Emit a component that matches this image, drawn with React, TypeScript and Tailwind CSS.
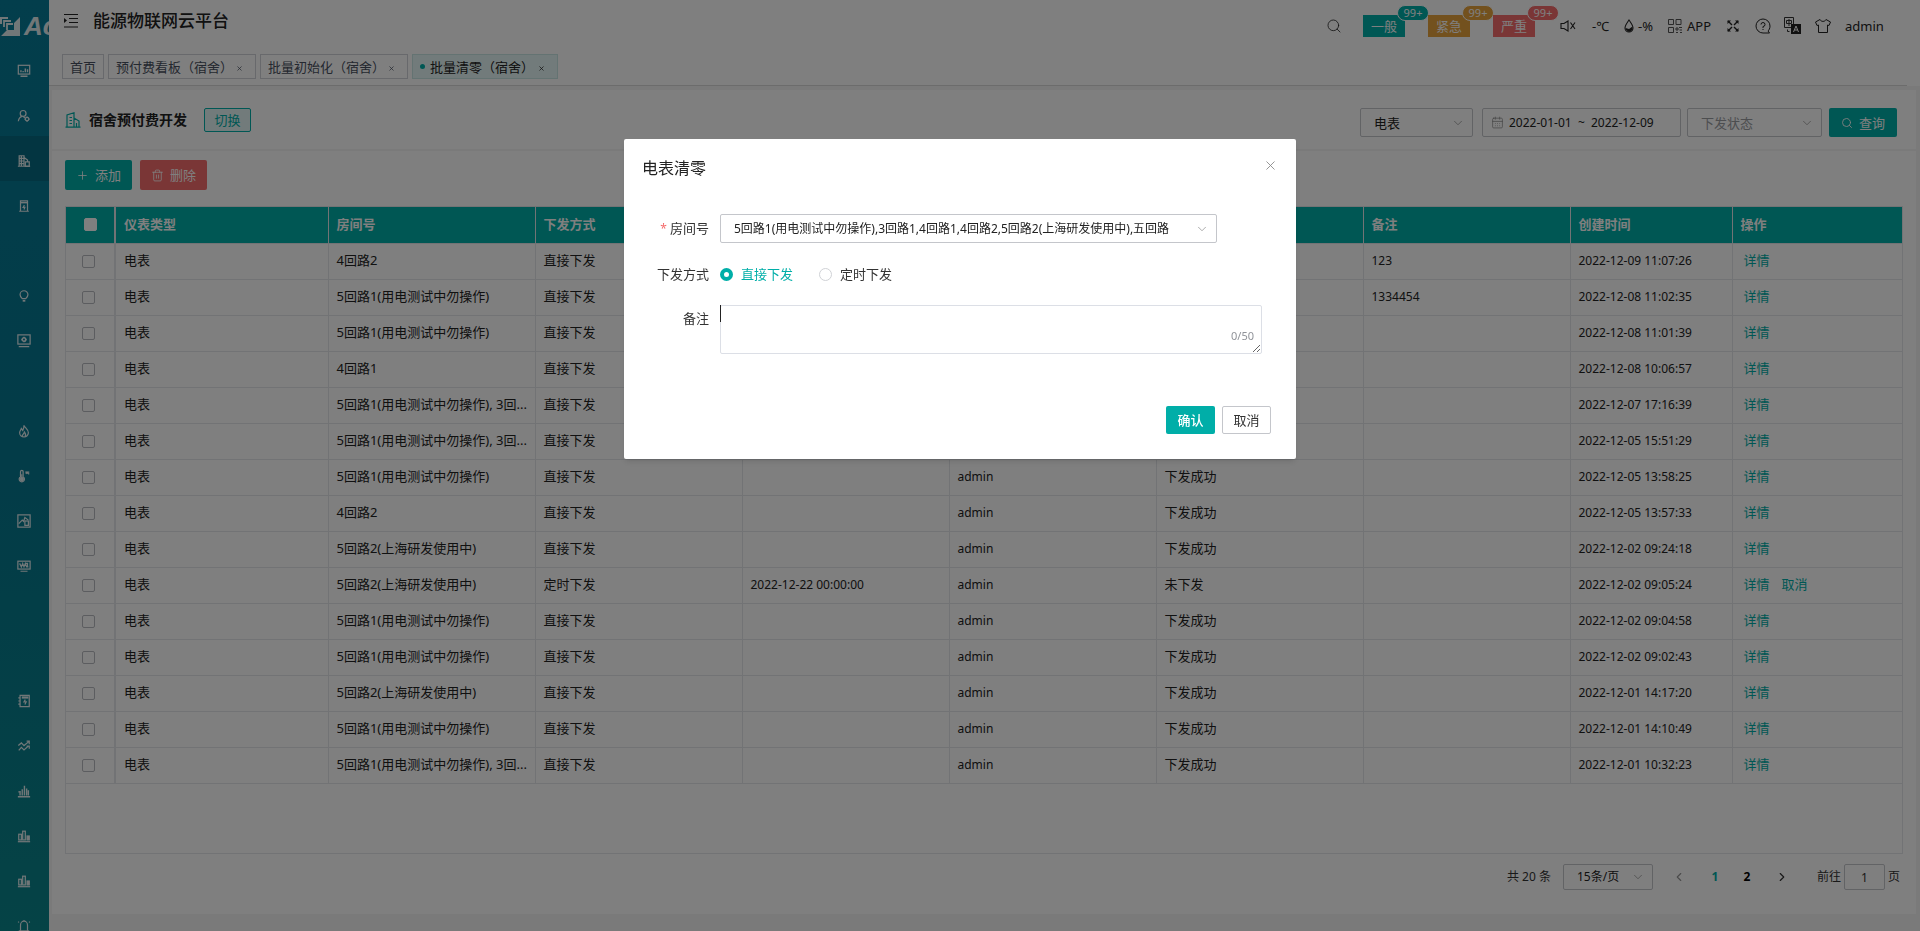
import React, { useState } from 'react';
import {
    CalendarDays, ChevronDown, ChevronLeft, ChevronRight, Plus, Search, Trash2, X,
} from 'lucide-react';

interface Row {
    room: string;
    mode: string;
    timing?: string;
    status: string;
    remark?: string;
    created: string;
    cancelable?: boolean;
}

const ROOM_A = '5回路1(用电测试中勿操作)';
const ROOM_B = '5回路2(上海研发使用中)';
const ROOM_LONG = '5回路1(用电测试中勿操作), 3回...';
const ROOM_ALL = '5回路1(用电测试中勿操作),3回路1,4回路1,4回路2,5回路2(上海研发使用中),五回路';

const rows: Row[] = [
    { room: '4回路2', mode: '直接下发', status: '下发成功', remark: '123', created: '2022-12-09 11:07:26' },
    { room: ROOM_A, mode: '直接下发', status: '下发成功', remark: '1334454', created: '2022-12-08 11:02:35' },
    { room: ROOM_A, mode: '直接下发', status: '下发成功', created: '2022-12-08 11:01:39' },
    { room: '4回路1', mode: '直接下发', status: '下发成功', created: '2022-12-08 10:06:57' },
    { room: ROOM_LONG, mode: '直接下发', status: '下发成功', created: '2022-12-07 17:16:39' },
    { room: ROOM_LONG, mode: '直接下发', status: '下发成功', created: '2022-12-05 15:51:29' },
    { room: ROOM_A, mode: '直接下发', status: '下发成功', created: '2022-12-05 13:58:25' },
    { room: '4回路2', mode: '直接下发', status: '下发成功', created: '2022-12-05 13:57:33' },
    { room: ROOM_B, mode: '直接下发', status: '下发成功', created: '2022-12-02 09:24:18' },
    { room: ROOM_B, mode: '定时下发', timing: '2022-12-22 00:00:00', status: '未下发', created: '2022-12-02 09:05:24', cancelable: true },
    { room: ROOM_A, mode: '直接下发', status: '下发成功', created: '2022-12-02 09:04:58' },
    { room: ROOM_A, mode: '直接下发', status: '下发成功', created: '2022-12-02 09:02:43' },
    { room: ROOM_B, mode: '直接下发', status: '下发成功', created: '2022-12-01 14:17:20' },
    { room: ROOM_A, mode: '直接下发', status: '下发成功', created: '2022-12-01 14:10:49' },
    { room: ROOM_LONG, mode: '直接下发', status: '下发成功', created: '2022-12-01 10:32:23' },
];

const icons: Record<string, React.ReactNode> = {
    monitor: <><rect x="1.5" y="1.5" width="13" height="10" /><path d="M4.500 9.500V7M7 9.500V8M9.500 9.500V5M12 9.500V6M4 14H12" strokeWidth="1.6" /></>,
    user: <><circle cx="7" cy="5" r="3.300" /><path d="M1.500 14C2 11 3.500 9 6 8.500M7 8.500L9 10" /><circle cx="11.500" cy="11.500" r="2" /><path d="M11.500 8.500V9.500M11.500 13.500V14.500M8.500 11.500H9.500M13.500 11.500H14.500" /></>,
    building: <><path d="M2.500 14V2H8V14M1 14H15M5 2V14M2.500 5H8M2.500 8H8M2.500 11H8M8 4L12 7V9" /><rect x="9.500" y="9" width="4.500" height="5" /></>,
    charger: <><path d="M4 14V2H12V14M2.500 14H13.500" /><path d="M4 4H12" strokeWidth="2" /><path d="M8.500 7L7 9.500H9L8 12" /></>,
    bulb: <><path d="M6 11C4.500 9.500 3.500 8.500 3.500 6.500A4.500 4.500 0 0 1 12.500 6.500C12.500 8.500 11.500 9.500 10 11Z" /><path d="M6.500 13.500H9.500" strokeWidth="2" /></>,
    screen: <><rect x="1" y="1" width="14" height="10.500" /><circle cx="8" cy="6.300" r="2" strokeWidth="1.8" /><path d="M8 3V4.500M8 8V9.500M5 6.300H6M10 6.300H11M2 14.500H14" /></>,
    fire: <path d="M8 1.500C8.500 4 13 6 13 10A5 4.800 0 0 1 3 10C3 8 4.500 7 5 5C6 6 6 7 6.500 7.500C7.500 6 8 4 8 1.500ZM6 14C6 12 8 11.500 8.500 9C10 10.500 10 12 9.500 14" />,
    thermo: <><path d="M4 9V3A1.500 1.500 0 0 1 7 3V9A3 3 0 1 1 4 9Z" /><circle cx="5.500" cy="11.500" r="1.800" fill="currentColor" /><path d="M5.500 6V11M10 3L14 6M10 5.500L13 3M9.500 3.500H14" /></>,
    image: <><rect x="1" y="1" width="14" height="14" /><path d="M2 11L6 7L7.500 8.500L9 4L13 7" /><rect x="9" y="8" width="4" height="5" /></>,
    wave: <><rect x="1" y="2.500" width="14" height="9" /><path d="M3 5L5 9L6.500 5L8 9L9.500 5L11 9L13 9M9 5H12V9M4 14H12" /></>,
    book: <><path d="M3.500 1.500H14V14.500H3.500ZM1.500 4.500H4M1.500 8H4M1.500 11.500H4" /><path d="M5.500 4H13" strokeWidth="2.5" /><path d="M9.500 6.500L8 9H10.500L9 12" /></>,
    trend: <path d="M1.500 7.500L5 4.500L8 7.500L13.500 3M11 2.500H14V6M2 13L5 9.500L8 12.500L13 8M11 8H14V11" />,
    bars: <path d="M1 14.500H15M3.500 13V8M6 13V6M8.500 13V2M11 13V5M13 13V7M1.500 9H3.500" strokeWidth="1.6" />,
    columns: <><path d="M1 14.500H15" /><rect x="2" y="6" width="3" height="6.500" /><rect x="6.500" y="2.500" width="3" height="10" /><rect x="11.500" y="8" width="2.500" height="4.500" fill="currentColor" /></>,
    bell: <path d="M2 13.500H14M4 13V7A4 4.500 0 0 1 12 7V13M8 2V1M2 4L1.500 3M14 4L14.500 3M7 15H9" />,
};

const menu = [
    'monitor', 'user', 'building', 'charger', '', 'bulb', 'screen', '', 'fire', 'thermo', 'image', 'wave',
    '', '', 'book', 'trend', 'bars', 'columns', 'columns', 'bell',
];

const Sidebar = () => (
    <aside className="w-[49px] shrink-0 overflow-hidden bg-gradient-to-b from-[#067c98] via-[#067890] to-[#0b868c] text-[#e3eef0]">
        <div className="flex h-[46px] w-24 items-end pb-2.5">
            <svg viewBox="0 0 20 20" className="h-5 w-5 shrink-0">
                <path d="M0 1H8V3H2V8H0ZM20 1V20H1L7 14H14V7Z" fill="currentColor" />
                <path d="M4 11V5H11M7 14V8H13" fill="none" stroke="currentColor" strokeWidth="1.8" />
            </svg>
            <span className="ml-1 font-['Liberation_Sans',sans-serif] text-[26px] leading-5 font-bold italic">Ac</span>
        </div>
        <nav>
            {menu.map((name, i) => (
                <a
                    key={i}
                    href="#"
                    aria-label={name || 'menu'}
                    className={`flex h-[45px] items-center justify-center pt-1 pr-0.5 ${i === 2 ? 'bg-[#066a82]' : ''}`}
                >
                    {name && (
                        <svg viewBox="0 0 16 16" className="h-3.5 w-3.5" fill="none" stroke="currentColor" strokeWidth="1.4">
                            {icons[name]}
                        </svg>
                    )}
                </a>
            ))}
        </nav>
    </aside>
);

const Alarm = ({ label, className }: { label: string; className: string }) => (
    <button className={`relative mr-[23px] h-[22px] w-[42px] text-white ${className}`}>
        {label}
        <span className={`absolute -top-2.5 left-[34px] flex h-4 w-8 items-center justify-center rounded-full border border-white text-[11px] ${className}`}>99+</span>
    </button>
);

const Header = () => (
    <header className="bg-white">
        <div className="flex h-[43px] items-center pr-10 pl-3.5">
            <button aria-label="收起菜单" className="mr-3.5 mb-0.5">
                <svg viewBox="0 0 16 16" className="h-4 w-4" fill="none" stroke="#222" strokeWidth="1.1">
                    <path d="M1 1.500H15M6 5.500H15M6 9.500H15M1 14H15" />
                    <path d="M1 5L4 7.500L1 10Z" fill="#222" stroke="none" />
                </svg>
            </button>
            <h1 className="flex-1 pb-0.5 text-[17px] font-medium text-[#222]">能源物联网云平台</h1>
            <div className="flex items-center pt-2">
                <button aria-label="搜索" className="mr-[21px]"><Search size={16} strokeWidth={1.2} /></button>
                <Alarm label="一般" className="bg-[#00aea8]" />
                <Alarm label="紧急" className="bg-[#e6a23c]" />
                <Alarm label="严重" className="bg-[#f56c6c]" />
                <svg viewBox="0 0 16 16" className="ml-0.5 h-4 w-4" fill="none" stroke="#222" strokeWidth="1.1">
                    <path d="M1 5.500H4L8 3V13L4 10.500H1ZM10.500 4.500L15 11M15 4.500L10.500 11" />
                </svg>
                <span className="ml-4 w-8">-℃</span>
                <svg viewBox="0 0 10 14" className="h-3.5 w-2.5" fill="none" stroke="#222" strokeWidth="1.1">
                    <path d="M5 1C7 4 9 6.500 9 9A4 4 0 0 1 1 9C1 6.500 3 4 5 1Z" />
                    <path d="M1.500 9L5 10L8.500 7.500V11L5 13L2 11Z" fill="#222" stroke="none" />
                </svg>
                <span className="ml-1 w-[30px]">-%</span>
                <svg viewBox="0 0 14 14" className="h-3.5 w-3.5" fill="none" stroke="#555" strokeWidth="1">
                    <path d="M.5.500H5.500V5.500H.5ZM8 .5H13V5.500H8ZM.5 8.500H5.500V13.500H.5Z" />
                    <path d="M8 9H10V11H8ZM11 8.500H14M11.500 11H14M8 13.500H10M12 13.500H14" />
                </svg>
                <span className="ml-[5px] w-10">APP</span>
                <button aria-label="全屏">
                    <svg viewBox="0 0 12 12" className="h-3 w-3" fill="#222" stroke="#222" strokeWidth="1.4">
                        <path d="M1 1L5 5M11 1L7 5M1 11L5 7M11 11L7 7" />
                        <path d="M.5.500H4L.5 4ZM11.500.500H8L11.500 4ZM.5 11.500H4L.5 8ZM11.500 11.500H8L11.500 8Z" stroke="none" />
                    </svg>
                </button>
                <button aria-label="帮助" className="ml-4">
                    <svg viewBox="0 0 16 16" className="h-4 w-4" fill="none" stroke="#222" strokeWidth="1">
                        <path d="M14.500 15H8A7 7 0 1 1 15 8C15 10.500 14 12 13 13ZM6 6.500A2 2 0 1 1 8 8.500V10M8 11V12" />
                    </svg>
                </button>
                <button aria-label="语言" className="ml-[13px]">
                    <svg viewBox="0 0 17 17" className="h-[17px] w-[17px]" fill="none" stroke="#333" strokeWidth="1">
                        <path d="M.5.500H9.500V10.500H.5ZM2.500 3.500H7.500V6.500H2.500ZM5 2V9M3.500 12.500V14.500H5.500" />
                        <rect x="7" y="7" width="10" height="10" fill="#222" stroke="none" />
                        <path d="M9.500 15L12 9L14.500 15M10.500 13H13.500" stroke="#fff" />
                    </svg>
                </button>
                <button aria-label="主题" className="ml-3.5">
                    <svg viewBox="0 0 16 16" className="h-4 w-4" fill="none" stroke="#222" strokeWidth="1">
                        <path d="M5 1.500C6 4 10 4 11 1.500L15.500 4L14 7.500L12.500 7V14.500H3.500V7L2 7.500L.5 4Z" />
                    </svg>
                </button>
                <span className="ml-3.5 w-[35px]">admin</span>
            </div>
        </div>
        <nav className="mr-[13px] flex h-[43px] items-start gap-1 border-b border-[#d8d8d8] pt-[11px] pl-[13px] text-[#495060]">
            <a href="#" className="flex h-[25px] w-[42px] items-center justify-center border border-[#d0d3d8]">首页</a>
            {['预付费看板（宿舍）', '批量初始化（宿舍）'].map((t) => (
                <a key={t} href="#" className="flex h-[25px] w-[148px] items-center justify-between border border-[#d0d3d8] pr-3 pl-[7px]">
                    {t}<X size={7} strokeWidth={2.5} className="mt-1 shrink-0" />
                </a>
            ))}
            <a href="#" className="flex h-[25px] w-[146px] items-center border border-[#c8e6e4] bg-[#e5f7f6] pr-3 pl-[7px] text-[#222]">
                <span className="mr-[5px] h-[5px] w-[5px] shrink-0 rounded-full bg-[#00aea8]" />
                <span className="flex-1 whitespace-nowrap">批量清零（宿舍）</span>
                <X size={7} strokeWidth={2.5} className="mt-1 shrink-0" />
            </a>
        </nav>
    </header>
);

interface SelectProps {
    label: string;
    options: string[];
    className: string;
    muted?: boolean;
}

const Select = ({ label, options, className, muted }: SelectProps) => (
    <div className={`relative ${className}`}>
        <select
            aria-label={label}
            className={`h-full w-full appearance-none rounded-xs border border-[#c4c6cb] bg-white pr-6 pl-[13px] ${muted ? 'text-[#9a9ca1]' : 'text-[#222]'}`}
        >
            {options.map((o) => <option key={o}>{o}</option>)}
        </select>
        <ChevronDown size={14} strokeWidth={1.2} className="pointer-events-none absolute top-1/2 right-2 -translate-y-1/2 text-[#888]" />
    </div>
);

const Toolbar = () => (
    <section className="flex h-[59px] items-center bg-white pr-[19px] pl-[13px]">
        <svg viewBox="0 0 16 16" className="h-4 w-4" fill="none" stroke="#00aea8" strokeWidth="1.2">
            <path d="M.5 15.200H15.500M2 15V3L9 .800V15M9 6L14 9V15M4.500 5.500H7M4.500 8.500H7M4.500 11.500H7M11.500 11V15" />
        </svg>
        <h2 className="ml-2 text-[14px] font-bold text-[#222]">宿舍预付费开发</h2>
        <button className="ml-[17px] h-6 w-[47px] rounded-xs border border-[#00aea8] bg-[#e5f7f6] text-[#00aea8]">切换</button>
        <div className="ml-auto flex items-center pt-1.5">
            <Select label="仪表类型" options={['电表', '水表']} className="h-[29px] w-[113px]" />
            <label className="ml-[9px] flex h-[29px] w-[199px] items-center rounded-xs border border-[#c4c6cb] px-2 text-[12px]">
                <CalendarDays size={13} strokeWidth={1.3} className="shrink-0 text-[#888]" />
                <input aria-label="日期范围" defaultValue="2022-01-01  ~  2022-12-09" className="ml-[5px] w-full whitespace-pre outline-none" />
            </label>
            <Select label="下发状态" options={['下发状态', '下发成功', '未下发']} className="ml-1.5 h-[29px] w-[135px]" muted />
            <button className="ml-[7px] flex h-[29px] w-[68px] items-center justify-center gap-1.5 rounded-xs bg-[#00aea8] text-white">
                <Search size={12} strokeWidth={1.8} />查询
            </button>
        </div>
    </section>
);

const Checkbox = ({ label, className = 'border-[#b9bbc0]' }: { label: string; className?: string }) => (
    <input type="checkbox" aria-label={label} className={`block h-[13px] w-[13px] appearance-none rounded-xs border bg-white ${className}`} />
);

const headings = ['仪表类型', '房间号', '下发方式', '定时时间', '操作人', '下发状态', '备注', '创建时间', '操作'];

const RecordTable = () => (
    <div className="h-[648px] border border-[#e4e6ea]">
        <table className="w-full table-fixed border-collapse text-left text-[#222]">
            <colgroup>
                <col className="w-[49px]" />
                <col className="w-[213px]" />
                <col className="w-[207px]" />
                <col className="w-[207px]" />
                <col className="w-[207px]" />
                <col className="w-[207px]" />
                <col className="w-[207px]" />
                <col className="w-[207px]" />
                <col className="w-[162px]" />
                <col />
            </colgroup>
            <thead>
                <tr className="h-9 bg-[#00aea8] text-white">
                    <th className="border-r-2 border-b border-[#e4e6ea] pl-[18px]"><Checkbox label="全选" className="border-white" /></th>
                    {headings.map((h) => (
                        <th key={h} className="border-r border-b border-[#e4e6ea] px-2 pb-0.5 font-bold last:border-r-0">{h}</th>
                    ))}
                </tr>
            </thead>
            <tbody>
                {rows.map((r) => (
                    <tr key={r.created} className="h-9">
                        <td className="border-r-2 border-b border-[#e4e6ea] pl-4"><Checkbox label={r.created} /></td>
                        <td className="border-r border-b border-[#e4e6ea] px-2 pb-0.5">电表</td>
                        <td className="border-r border-b border-[#e4e6ea] pb-0.5 pl-2 whitespace-nowrap">{r.room}</td>
                        <td className="border-r border-b border-[#e4e6ea] px-2 pb-0.5">{r.mode}</td>
                        <td className="border-r border-b border-[#e4e6ea] px-2 text-[12px]">{r.timing}</td>
                        <td className="border-r border-b border-[#e4e6ea] px-2 text-[12px]">admin</td>
                        <td className="border-r border-b border-[#e4e6ea] px-2 pb-0.5">{r.status}</td>
                        <td className="border-r border-b border-[#e4e6ea] px-2 text-[12px]">{r.remark}</td>
                        <td className="border-r border-b border-[#e4e6ea] px-2 text-[12px]">{r.created}</td>
                        <td className="border-b border-[#e4e6ea] pb-0.5 pl-[11px] text-[#00aea8]">
                            <button>详情</button>
                            {r.cancelable && <button className="ml-3">取消</button>}
                        </td>
                    </tr>
                ))}
            </tbody>
        </table>
    </div>
);

const Pagination = () => (
    <div className="flex items-center justify-end pt-2.5 pr-[3px] text-[#333]">
        <span className="text-[12px]">共 20 条</span>
        <Select label="每页条数" options={['15条/页', '30条/页']} className="ml-3 h-[26px] w-[90px] text-[12px]" />
        <button aria-label="上一页" className="ml-[19px]"><ChevronLeft size={14} className="text-[#999]" /></button>
        <button className="ml-[13px] w-8 text-[12px] font-bold text-[#00aea8]">1</button>
        <button className="w-8 text-[12px] font-bold text-black">2</button>
        <button aria-label="下一页" className="ml-3"><ChevronRight size={14} /></button>
        <label className="ml-7 flex items-center text-[12px]">
            前往
            <input defaultValue="1" className="mx-[3px] h-[26px] w-[41px] rounded-xs border border-[#c4c6cb] text-center outline-none" />
            页
        </label>
    </div>
);

const ClearDialog = ({ onClose }: { onClose: () => void }) => {
    const [mode, setMode] = useState('直接下发');
    const [remark, setRemark] = useState('');

    return (
        <div className="fixed inset-0 z-50 bg-black/50 pt-[139px]">
            <form
                role="dialog"
                aria-label="电表清零"
                className="mx-auto w-[672px] rounded-xs bg-white px-[18px] pt-4 pb-[25px] text-[#333] shadow-md"
                onSubmit={(e) => e.preventDefault()}
            >
                <div className="flex h-7 items-start justify-between pt-[3px]">
                    <h3 className="text-[16px] text-[#222]">电表清零</h3>
                    <button type="button" aria-label="关闭" onClick={onClose}><X size={15} strokeWidth={1.4} className="text-[#888]" /></button>
                </div>
                <div className="mt-[31px] flex items-center">
                    <span className="mr-[11px] w-[67px] text-right"><span className="text-[12px] text-[#f56c6c]">* </span>房间号</span>
                    <Select label="房间号" options={[ROOM_ALL]} className="h-[29px] w-[497px] text-[12px]" />
                </div>
                <div className="mt-[21px] flex h-5 items-center">
                    <span className="mr-[11px] w-[67px] text-right">下发方式</span>
                    {['直接下发', '定时下发'].map((m) => (
                        <label key={m} className={`mr-[26px] flex items-center gap-2 ${mode === m ? 'text-[#00aea8]' : ''}`}>
                            <input
                                type="radio"
                                name="mode"
                                checked={mode === m}
                                onChange={() => setMode(m)}
                                className="h-[13px] w-[13px] appearance-none rounded-full border border-[#d0d2d6] checked:border-4 checked:border-[#00aea8]"
                            />
                            {m}
                        </label>
                    ))}
                </div>
                <div className="mt-[21px] flex">
                    <label htmlFor="remark" className="mr-[11px] w-[67px] pt-[3px] text-right">备注</label>
                    <div className="relative h-[49px] w-[542px]">
                        <textarea
                            id="remark"
                            maxLength={50}
                            value={remark}
                            onChange={(e) => setRemark(e.target.value)}
                            className="block h-[49px] w-full rounded-xs border border-[#dcdfe6] px-3 py-1 outline-none"
                        />
                        <span className="pointer-events-none absolute top-0 left-0 h-[17px] w-px bg-[#222]" />
                        <span className="pointer-events-none absolute right-2 bottom-2 text-[11px] text-[#909399]">{remark.length}/50</span>
                    </div>
                </div>
                <div className="mt-[52px] flex justify-end gap-[7px] pr-[7px]">
                    <button type="submit" className="h-7 w-[49px] rounded-xs bg-[#00aea8] font-medium text-white">确认</button>
                    <button type="button" onClick={onClose} className="h-7 w-[49px] rounded-xs border border-[#c4c6cb]">取消</button>
                </div>
            </form>
        </div>
    );
};

const App = () => {
    const [open, setOpen] = useState(true);

    return (
        <div className="flex h-screen overflow-hidden bg-[#f4f4f4] font-['Noto_Sans','Noto_Sans_CJK_SC',sans-serif] text-[13px] leading-5 text-[#222]">
            <Sidebar />
            <div className="min-w-0 flex-1">
                <Header />
                <main className="mt-1 mr-1 ml-[3px]">
                    <Toolbar />
                    <section className="mt-0.5 bg-white px-[13px] pt-[9px] pb-6">
                        <div className="mb-4 flex gap-2 text-white">
                            <button onClick={() => setOpen(true)} className="flex h-[30px] w-[67px] items-center justify-center gap-1.5 rounded-xs bg-[#00aea8]">
                                <Plus size={13} strokeWidth={1.5} />添加
                            </button>
                            <button className="flex h-[30px] w-[67px] items-center justify-center gap-1.5 rounded-xs bg-[#f56c6c]">
                                <Trash2 size={13} strokeWidth={1.5} />删除
                            </button>
                        </div>
                        <RecordTable />
                        <Pagination />
                    </section>
                </main>
            </div>
            {open && <ClearDialog onClose={() => setOpen(false)} />}
        </div>
    );
};

export default App;
